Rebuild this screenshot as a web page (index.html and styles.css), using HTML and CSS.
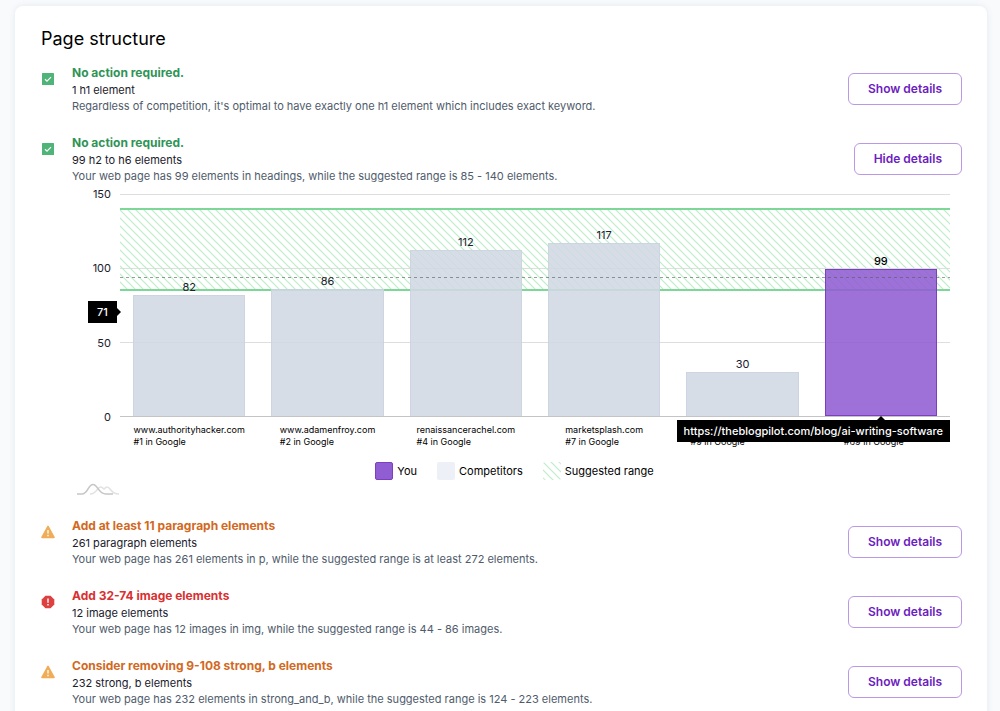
FILE: index.html
```html
<!DOCTYPE html>
<html lang="en">
<head>
<meta charset="utf-8">
<meta name="viewport" content="width=device-width, initial-scale=1">
<title>Page structure</title>
<link rel="stylesheet" href="styles.css">
</head>
<body>
<svg class="defs" aria-hidden="true">
  <defs>
    <pattern id="hatch" width="8" height="8" patternUnits="userSpaceOnUse">
      <path d="M-2 -2L10 10M-2 6L2 10M6 -2L10 2" stroke="#bdedc9" stroke-width="1.2" fill="none"/>
    </pattern>
    <symbol id="icon-ok" viewBox="0 0 14 14">
      <rect x="1" y="1" width="12" height="12" rx="0.5" fill="#4fb477"/>
      <path d="M4 7.2L6 9.1L10 5.1" fill="none" stroke="#fff" stroke-width="1.2"/>
    </symbol>
    <symbol id="icon-warn" viewBox="0 0 14 14">
      <path d="M7 1.4L13 12.4H1Z" fill="#efad58" stroke="#efad58" stroke-width="1.6" stroke-linejoin="round"/>
      <path d="M7 5V8.6M7 9.8V11.2" stroke="#fff" stroke-width="1.3"/>
    </symbol>
    <symbol id="icon-error" viewBox="0 0 14 14">
      <path d="M4.4 0.7H9.6L13.3 4.4V9.6L9.6 13.3H4.4L0.7 9.6V4.4Z" fill="#dc4040"/>
      <path d="M7 3.6V7.8M7 9V10.4" stroke="#fff" stroke-width="1.4"/>
    </symbol>
  </defs>
</svg>
<main class="card">
  <h1 class="card-title">Page structure</h1>

  <section class="check ok">
    <svg class="check-icon"><use href="#icon-ok"/></svg>
    <div class="check-text">
      <h2 class="check-title">No action required.</h2>
      <p class="check-count">1 h1 element</p>
      <p class="check-note">Regardless of competition, it's optimal to have exactly one h1 element which includes exact keyword.</p>
    </div>
    <button class="toggle" type="button">Show details</button>
  </section>

  <section class="check ok open">
    <svg class="check-icon"><use href="#icon-ok"/></svg>
    <div class="check-text">
      <h2 class="check-title">No action required.</h2>
      <p class="check-count">99 h2 to h6 elements</p>
      <p class="check-note">Your web page has 99 elements in headings, while the suggested range is 85 - 140 elements.</p>
    </div>
    <button class="toggle" type="button">Hide details</button>
  </section>

  <div class="chart">
    <div class="axis">
      <span>150</span><span>100</span><span>50</span><span>0</span>
      <div class="axis-tip" style="bottom:47.33%">71</div>
    </div>
    <div class="plot">
      <div class="grid-lines"></div>
      <div class="range" style="top:6.67%;bottom:56.67%"><svg class="fill"><rect width="100%" height="100%" fill="url(#hatch)"/></svg></div>
      <div class="bars">
        <div class="slot"><span class="value">82</span><div class="bar" style="height:54.67%"></div></div>
        <div class="slot"><span class="value">86</span><div class="bar" style="height:57.33%"></div></div>
        <div class="slot"><span class="value">112</span><div class="bar" style="height:74.67%"></div></div>
        <div class="slot"><span class="value">117</span><div class="bar" style="height:78%"></div></div>
        <div class="slot"><span class="value">30</span><div class="bar" style="height:20%"></div></div>
        <div class="slot"><span class="value strong">99</span><div class="bar you" style="height:66%"></div></div>
      </div>
      <div class="average" style="bottom:62%"></div>
      <div class="url-tip">https://theblogpilot.com/blog/ai-writing-software</div>
    </div>
    <div class="labels">
      <p>www.authorityhacker.com<br>#1 in Google</p>
      <p>www.adamenfroy.com<br>#2 in Google</p>
      <p>renaissancerachel.com<br>#4 in Google</p>
      <p>marketsplash.com<br>#7 in Google</p>
      <p class="wide"><br>#9 in Google</p>
      <p class="medium"><br>#69 in Google</p>
    </div>
    <div class="legend">
      <span class="key"><i class="swatch swatch-you"></i>You</span>
      <span class="key"><i class="swatch swatch-comp"></i>Competitors</span>
      <span class="key"><svg class="swatch"><rect width="100%" height="100%" fill="url(#hatch)"/></svg>Suggested range</span>
    </div>
    <svg class="mark" viewBox="0 0 44 14" fill="none" stroke-width="1.6" aria-hidden="true">
      <path d="M14 12C21 12 21 5 24.500 5C27 5 27 7 28 7C29 7 29 5 31 5C35 5 34 12 43 12" stroke="#e2e2e2"/>
      <path d="M1 12H6C12 12 12 2.500 17 2.500C22 2.500 22 12 30 12H37" stroke="#c6c6c6"/>
    </svg>
  </div>

  <section class="check warn">
    <svg class="check-icon"><use href="#icon-warn"/></svg>
    <div class="check-text">
      <h2 class="check-title">Add at least 11 paragraph elements</h2>
      <p class="check-count">261 paragraph elements</p>
      <p class="check-note">Your web page has 261 elements in p, while the suggested range is at least 272 elements.</p>
    </div>
    <button class="toggle" type="button">Show details</button>
  </section>

  <section class="check error">
    <svg class="check-icon"><use href="#icon-error"/></svg>
    <div class="check-text">
      <h2 class="check-title">Add 32-74 image elements</h2>
      <p class="check-count">12 image elements</p>
      <p class="check-note">Your web page has 12 images in img, while the suggested range is 44 - 86 images.</p>
    </div>
    <button class="toggle" type="button">Show details</button>
  </section>

  <section class="check warn">
    <svg class="check-icon"><use href="#icon-warn"/></svg>
    <div class="check-text">
      <h2 class="check-title">Consider removing 9-108 strong, b elements</h2>
      <p class="check-count">232 strong, b elements</p>
      <p class="check-note">Your web page has 232 elements in strong_and_b, while the suggested range is 124 - 223 elements.</p>
    </div>
    <button class="toggle" type="button">Show details</button>
  </section>
</main>
</body>
</html>
```
FILE: styles.css
```css
* { box-sizing: border-box; }

body {
  margin: 0;
  padding: 6px 13px 0 15px;
  background: #f8fafc;
  color: #1a202c;
  font-family: Inter, "Open Sans", sans-serif;
  font-size: 11px;
  line-height: 16px;
}

h1, h2, p { margin: 0; font-weight: 400; }

.defs { position: absolute; width: 0; height: 0; }

.card {
  padding: 19px 25px 20px 26px;
  background: #fff;
  border-radius: 8px;
  box-shadow: 0 0 6px rgba(100, 116, 139, 0.12);
}

.card-title {
  margin-bottom: 11px;
  color: #000;
  font-size: 18px;
  line-height: 28px;
}

.check {
  display: flex;
  align-items: center;
  margin-bottom: 20px;
}

.check.open { margin-bottom: 10px; }

.check-icon {
  flex: none;
  align-self: flex-start;
  width: 14px;
  height: 14px;
  margin: 8px 17px 0 0;
}

.check-text { flex: 1; min-width: 0; }

.check-title {
  font-size: 12px;
  font-weight: 700;
  line-height: 18px;
}

.ok .check-title { color: #2f9455; }
.warn .check-title { color: #d2691e; }
.error .check-title { color: #d93030; }

.check-note { color: #4f5b6b; }

.toggle {
  height: 32px;
  padding: 0 19px;
  border: 1px solid #bb98e6;
  border-radius: 6px;
  background: #fff;
  color: #6b21c0;
  font: 600 12px/16px Inter, "Open Sans", sans-serif;
}

.chart {
  display: grid;
  grid-template-columns: 44px 1fr;
  margin: 0 9px 21px 35px;
}

.axis {
  position: relative;
  display: flex;
  flex-direction: column;
  justify-content: space-between;
  margin: -7px 0;
  padding-right: 9px;
  line-height: 14px;
  text-align: right;
}

.axis-tip {
  position: absolute;
  right: 3px;
  width: 29px;
  margin-bottom: -11px;
  background: #000;
  color: #fff;
  font-weight: 500;
  line-height: 22px;
  text-align: center;
}

.axis-tip::after {
  content: "";
  position: absolute;
  top: 7px;
  left: 100%;
  border: 4px solid transparent;
  border-left-color: #000;
  border-right: 0;
}

.plot {
  position: relative;
  height: 223px;
  margin-right: 3px;
  border-bottom: 1px solid #c4c4c4;
}

.grid-lines {
  position: absolute;
  inset: 0;
  background: repeating-linear-gradient(#dedede 0 1px, transparent 1px 74px);
}

.range {
  position: absolute;
  left: 0;
  right: 0;
  margin: -1px 0;
  border: solid #7dd797;
  border-width: 2px 0;
}

.fill { display: block; width: 100%; height: 100%; }

.bars {
  position: relative;
  display: grid;
  grid-template-columns: repeat(6, 1fr);
  height: 100%;
}

.slot {
  display: flex;
  flex-direction: column;
  align-items: center;
  justify-content: flex-end;
  min-height: 0;
}

.value { margin-bottom: 1px; line-height: 14px; }
.value.strong { color: #000; font-weight: 500; }

.bar {
  flex: none;
  width: 81%;
  border: 1px solid rgba(196, 206, 219, 0.5);
  border-bottom: 0;
  background: rgba(208, 216, 226, 0.88);
}

.bar.you {
  border: 1px solid #7c3fc0;
  background: rgba(145, 93, 211, 0.88);
}

.average {
  position: absolute;
  left: 0;
  right: 0;
  height: 1px;
  background: repeating-linear-gradient(90deg, rgba(90, 90, 90, 0.6) 0 3px, transparent 3px 6px);
}

.url-tip {
  position: absolute;
  top: 100%;
  right: 0;
  z-index: 1;
  margin-top: 4px;
  padding: 0 7px;
  background: #000;
  color: #fff;
  font-weight: 500;
  line-height: 22px;
  white-space: nowrap;
}

.url-tip::before {
  content: "";
  position: absolute;
  right: 65px;
  bottom: 100%;
  border: 4px solid transparent;
  border-bottom-color: #000;
  border-top: 0;
}

.labels {
  grid-column: 2;
  display: grid;
  grid-template-columns: repeat(6, 1fr);
  justify-items: center;
  margin: 7px 3px 14px 0;
  color: #000;
  font-size: 9px;
  line-height: 12px;
}

.labels .wide { min-width: 104px; }
.labels .medium { min-width: 74px; }

.legend {
  grid-column: 1 / -1;
  display: flex;
  justify-content: center;
  gap: 20px;
  color: #000;
}

.key { display: flex; align-items: center; gap: 4px; }

.swatch { width: 18px; height: 18px; border-radius: 2px; }
.swatch-you { border: 1px solid #7c3fc0; background: #915dd3; }
.swatch-comp { background: #edf0f6; }

.mark { grid-column: 1 / -1; width: 44px; height: 14px; margin-top: 2px; }
```
